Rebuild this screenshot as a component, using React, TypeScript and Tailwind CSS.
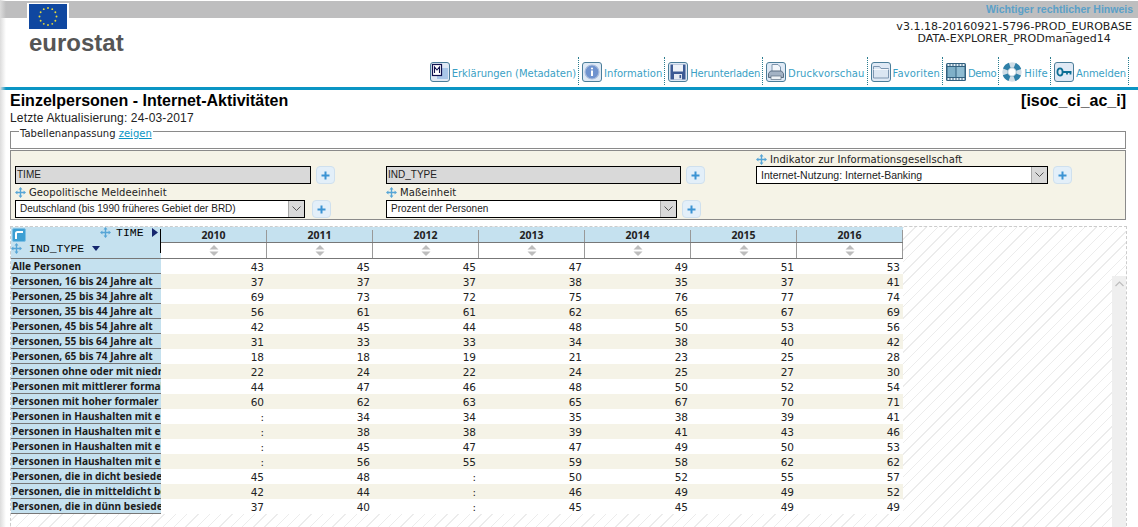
import React from "react";

const years = ["2010", "2011", "2012", "2013", "2014", "2015", "2016"];

const rows: [string, string[]][] = [
  ["Alle Personen", ["43", "45", "45", "47", "49", "51", "53"]],
  ["Personen, 16 bis 24 Jahre alt", ["37", "37", "37", "38", "35", "37", "41"]],
  ["Personen, 25 bis 34 Jahre alt", ["69", "73", "72", "75", "76", "77", "74"]],
  ["Personen, 35 bis 44 Jahre alt", ["56", "61", "61", "62", "65", "67", "69"]],
  ["Personen, 45 bis 54 Jahre alt", ["42", "45", "44", "48", "50", "53", "56"]],
  ["Personen, 55 bis 64 Jahre alt", ["31", "33", "33", "34", "38", "40", "42"]],
  ["Personen, 65 bis 74 Jahre alt", ["18", "18", "19", "21", "23", "25", "28"]],
  ["Personen ohne oder mit niedri", ["22", "24", "22", "24", "25", "27", "30"]],
  ["Personen mit mittlerer formal", ["44", "47", "46", "48", "50", "52", "54"]],
  ["Personen mit hoher formaler B", ["60", "62", "63", "65", "67", "70", "71"]],
  ["Personen in Haushalten mit ei", [":", "34", "34", "35", "38", "39", "41"]],
  ["Personen in Haushalten mit ei", [":", "38", "38", "39", "41", "43", "46"]],
  ["Personen in Haushalten mit ei", [":", "45", "47", "47", "49", "50", "53"]],
  ["Personen in Haushalten mit ei", [":", "56", "55", "59", "58", "62", "62"]],
  ["Personen, die in dicht besiedel", ["45", "48", ":", "50", "52", "55", "57"]],
  ["Personen, die in mitteldicht be", ["42", "44", ":", "46", "49", "49", "52"]],
  ["Personen, die in dünn besiedel", ["37", "40", ":", "45", "45", "49", "49"]],
];

const EuFlag = () => {
  const stars = Array.from({ length: 12 }, (_, i) => {
    const a = (i * Math.PI) / 6;
    return { x: 19 + Math.sin(a) * 8.5, y: 12.5 - Math.cos(a) * 8.5 };
  });
  return (
    <svg width="42" height="27" viewBox="-2 -1 42 27" className="block">
      <rect x="-2" y="-1" width="42" height="27" fill="#fff" />
      <rect x="0" y="0" width="38" height="25" fill="#0f47a0" />
      {stars.map((s, i) => (
        <circle key={i} cx={s.x} cy={s.y} r="0.95" fill="#e6d93a" />
      ))}
    </svg>
  );
};

const Tile = ({ children }: { children: React.ReactNode }) => (
  <span className="w-[20px] h-[20px] rounded-[3px] border border-[#4b7d99] bg-[#dfe9f5] flex items-center justify-center shrink-0 overflow-hidden">
    {children}
  </span>
);

const MetaIcon = () => (
  <Tile>
    <svg width="18" height="18" viewBox="0 0 18 18">
      <rect x="6" y="5" width="11" height="11" fill="#a9c6e8" />
      <rect x="1.5" y="1.5" width="9" height="11" fill="#fff" stroke="#10124f" strokeWidth="1.2" />
      <path d="M3.5 10V4l2.5 3 2.5-3v6" fill="none" stroke="#10124f" strokeWidth="1.1" />
    </svg>
  </Tile>
);

const InfoIcon = () => (
  <Tile>
    <svg width="18" height="18" viewBox="0 0 18 18">
      <circle cx="9" cy="9" r="7" fill="#6f93cf" stroke="#a9bcdc" strokeWidth="1.2" />
      <circle cx="9" cy="5.5" r="1.1" fill="#fff" />
      <rect x="8" y="7.5" width="2" height="5.5" fill="#fff" />
    </svg>
  </Tile>
);

const SaveIcon = () => (
  <Tile>
    <svg width="18" height="18" viewBox="0 0 18 18">
      <rect x="1.5" y="1.5" width="15" height="15" fill="#3d5a94" />
      <rect x="4" y="1.5" width="10" height="7" fill="#eef2f8" />
      <rect x="5" y="11" width="8" height="5.5" fill="#e6ebf3" />
      <rect x="10.5" y="12" width="1.6" height="3.2" fill="#3d5a94" />
    </svg>
  </Tile>
);

const PrintIcon = () => (
  <Tile>
    <svg width="18" height="18" viewBox="0 0 18 18">
      <path d="M5 1.5h6l2.5 2.5v5H5z" fill="#f2f6fb" stroke="#7b93ad" />
      <path d="M1.5 10.5l2-2.5h11l2 2.5v4h-15z" fill="#a3b2c4" stroke="#5d6f83" />
      <rect x="4" y="13" width="10" height="3.5" fill="#eef2f6" stroke="#5d6f83" strokeWidth="0.7" />
    </svg>
  </Tile>
);

const FolderIcon = () => (
  <Tile>
    <svg width="18" height="18" viewBox="0 0 18 18">
      <path d="M1.5 15V3.5h6l1.5 2h7.5V15z" fill="#dbe6f2" stroke="#7e97b1" />
      <path d="M1.5 6.5h15" stroke="#f6f9fc" />
    </svg>
  </Tile>
);

const FilmIcon = () => (
  <svg width="20" height="20" viewBox="0 0 20 20" className="shrink-0">
    <rect x="0" y="1" width="20" height="18" rx="1.5" fill="#33617f" />
    <rect x="1.5" y="5" width="8" height="10" fill="#7fb0c8" />
    <rect x="10.5" y="5" width="8" height="10" fill="#8fbcd2" />
    {[1.5, 4.5, 7.5, 10.5, 13.5, 16.5].map((x) => (
      <React.Fragment key={x}>
        <rect x={x} y="2" width="2" height="2" fill="#e3eef5" />
        <rect x={x} y="16" width="2" height="2" fill="#e3eef5" />
      </React.Fragment>
    ))}
  </svg>
);

const BuoyIcon = () => (
  <svg width="20" height="20" viewBox="0 0 20 20" className="shrink-0">
    <circle cx="10" cy="10" r="7" fill="none" stroke="#cfdde6" strokeWidth="5.4" />
    <circle cx="10" cy="10" r="7" fill="none" stroke="#2f80a8" strokeWidth="5.4" strokeDasharray="6 5" strokeDashoffset="-2.5" />
    <circle cx="10" cy="10" r="4.2" fill="#fff" stroke="#6a97b0" strokeWidth="0.6" />
  </svg>
);

const KeyIcon = () => (
  <Tile>
    <svg width="18" height="18" viewBox="0 0 18 18">
      <ellipse cx="5" cy="9" rx="2.6" ry="3.6" fill="none" stroke="#0d6f95" strokeWidth="1.8" />
      <path d="M7.5 9h9M12 9v2.5M15.5 9v2.5" fill="none" stroke="#0d6f95" strokeWidth="1.8" />
    </svg>
  </Tile>
);

const MoveIcon = () => (
  <svg width="11" height="11" viewBox="0 0 11 11" className="shrink-0">
    <path d="M5.5 0l2 2.4h-1.3v2.4h2.4V3.5L11 5.5 8.6 7.5V6.2H6.2v2.4h1.3l-2 2.4-2-2.4h1.3V6.2H2.4v1.3L0 5.5l2.4-2v1.3h2.4V2.4H3.5z" fill="#56a5d6" />
  </svg>
);

const PlusButton = () => (
  <span className="w-[19px] h-[18px] rounded-[4px] border border-[#cfe0ee] bg-[#e3eff9] flex items-center justify-center shrink-0">
    <svg width="9" height="9" viewBox="0 0 9 9">
      <path d="M4.5 0.5v8M0.5 4.5h8" stroke="#3b93d3" strokeWidth="2" />
    </svg>
  </span>
);

const SelectBox = ({ text, width, size = "text-[10px]" }: { text: string; width: string; size?: string }) => (
  <div className={`${width} h-[18px] border border-black bg-white flex items-center shrink-0`}>
    <span className={`flex-1 pl-[4px] font-['Liberation_Sans',sans-serif] ${size} leading-[14px] text-[#222] truncate`}>{text}</span>
    <span className="w-[16px] h-[16px] bg-[#d9d9d9] border-l border-[#a8a8a8] flex items-center justify-center">
      <svg width="9" height="6" viewBox="0 0 9 6">
        <path d="M0.5 0.5l4 4 4-4" fill="none" stroke="#555" />
      </svg>
    </span>
  </div>
);

const FixedBox = ({ text, width }: { text: string; width: string }) => (
  <div className={`${width} h-[18px] border border-black bg-[#d9d9d9] flex items-center pl-[1px] font-['Liberation_Sans',sans-serif] text-[10px] leading-[14px] text-[#222] shrink-0`}>
    {text}
  </div>
);

const FilterLabel = ({ text }: { text: string }) => (
  <div className="h-[15px] flex items-center gap-[3px] text-[10px] tracking-[0.08px] text-[#222]">
    <MoveIcon />
    <span>{text}</span>
  </div>
);

const ToolItem = ({ icon, label, spacing }: { icon: React.ReactNode; label: string; spacing: string }) => (
  <div className="h-[28px] pt-[2px] flex items-center pr-[2px] mr-[3px] border-r border-dotted border-[#2b7d8f]">
    {icon}
    <span className={`ml-[2px] mt-[2px] text-[10px] ${spacing} text-[#3a9fc5] whitespace-nowrap`}>{label}</span>
  </div>
);

export default function App() {
  return (
    <div className="relative w-[1138px] h-[527px] overflow-hidden bg-white font-['DejaVu_Sans',sans-serif] text-black">
      <div className="pointer-events-none absolute left-0 top-0 bottom-0 w-[6px] bg-gradient-to-r from-[#dcdcdc] to-transparent" />

      {/* top bar */}
      <div className="mt-px h-[17px] bg-[#bebebf] flex items-center justify-end pr-[5px]">
        <span className="font-['Liberation_Sans',sans-serif] text-[10.5px] font-bold text-[#5aa0c8]">Wichtiger rechtlicher Hinweis</span>
      </div>

      {/* header */}
      <div className="h-[69px] flex justify-between border-b-[3px] border-[#0b95c4] box-content">
        <div className="ml-[27px] -mt-[15px]">
          <EuFlag />
          <div className="ml-[2px] font-['Liberation_Sans',sans-serif] font-bold text-[24px] leading-[26px] text-[#555]">
            eurostat
          </div>
        </div>
        <div className="flex flex-col items-end pr-[6px]">
          <div className="pt-[3px] text-center text-[11px] leading-[12px] text-[#222] tracking-[0.03px]">
            <div>v3.1.18-20160921-5796-PROD_EUROBASE</div>
            <div>DATA-EXPLORER_PRODmanaged14</div>
          </div>
          <div className="mt-auto mb-[2px] flex items-end">
            <ToolItem icon={<MetaIcon />} label="Erklärungen (Metadaten)" spacing="tracking-[-0.05px]" />
            <ToolItem icon={<InfoIcon />} label="Information" spacing="tracking-[0.03px]" />
            <ToolItem icon={<SaveIcon />} label="Herunterladen" spacing="tracking-[-0.2px]" />
            <ToolItem icon={<PrintIcon />} label="Druckvorschau" spacing="tracking-[0.1px]" />
            <ToolItem icon={<FolderIcon />} label="Favoriten" spacing="tracking-[0.14px]" />
            <ToolItem icon={<FilmIcon />} label="Demo" spacing="tracking-[-0.4px]" />
            <ToolItem icon={<BuoyIcon />} label="Hilfe" spacing="tracking-[0.2px]" />
            <ToolItem icon={<KeyIcon />} label="Anmelden" spacing="tracking-[-0.08px]" />
          </div>
        </div>
      </div>

      {/* title */}
      <div className="pl-[10px] pr-[12px] pt-[2px] flex justify-between font-['Liberation_Sans',sans-serif] font-bold text-[16px] leading-[18px]">
        <span>Einzelpersonen - Internet-Aktivitäten</span>
        <span>[isoc_ci_ac_i]</span>
      </div>
      <div className="pl-[10px] font-['Liberation_Sans',sans-serif] text-[12px] tracking-[0.15px] leading-[16px] text-[#222]">
        Letzte Aktualisierung: 24-03-2017
      </div>

      {/* table customisation */}
      <div className="ml-[10px] mr-[12px] mt-[5px] h-[18px] border border-[#8a8a8a]">
        <div className="-mt-[4px] ml-[8px] w-fit bg-white px-px text-[10px] leading-[12px] text-[#222]">
          Tabellenanpassung <a className="text-[#0b95c4] underline">zeigen</a>
        </div>
      </div>

      {/* filters */}
      <div className="ml-[10px] mr-[12px] mt-[1px] h-[70px] border border-[#8a8a8a] bg-[#f5f3e7] pl-[4px] flex">
        <div className="w-[371px] pt-[15px]">
          <div className="flex items-center gap-[5px]">
            <FixedBox text="TIME" width="w-[296px]" />
            <PlusButton />
          </div>
          <div className="mt-[1px]">
            <FilterLabel text="Geopolitische Meldeeinheit" />
          </div>
          <div className="flex items-center gap-[7px]">
            <SelectBox text="Deutschland (bis 1990 früheres Gebiet der BRD)" width="w-[290px]" />
            <PlusButton />
          </div>
        </div>
        <div className="w-[370px] pt-[15px]">
          <div className="flex items-center gap-[5px]">
            <FixedBox text="IND_TYPE" width="w-[295px]" />
            <PlusButton />
          </div>
          <div className="mt-[1px]">
            <FilterLabel text="Maßeinheit" />
          </div>
          <div className="flex items-center gap-[5px]">
            <SelectBox text="Prozent der Personen" width="w-[291px]" />
            <PlusButton />
          </div>
        </div>
        <div className="pt-[1px]">
          <FilterLabel text="Indikator zur Informationsgesellschaft" />
          <div className="-mt-px flex items-center gap-[5px]">
            <SelectBox text="Internet-Nutzung: Internet-Banking" width="w-[292px]" size="text-[10.5px]" />
            <PlusButton />
          </div>
        </div>
      </div>

      {/* data table on hatched area */}
      <div className="relative ml-[10px] mr-[11px] mt-[6px] h-[310px] border-t border-r border-l border-dashed border-[#cccccc] bg-[repeating-linear-gradient(135deg,#ffffff_0px,#ffffff_7px,#ececec_7px,#ececec_8px)]">
        <div className="absolute right-0 top-[49px] bottom-0 w-[14px] bg-[#efefef] flex justify-center pt-[5px]">
          <svg width="9" height="6" viewBox="0 0 9 6">
            <path d="M0.5 5l4-4 4 4" fill="none" stroke="#bdbdbd" strokeWidth="1.2" />
          </svg>
        </div>

        <div className="w-[892px]">
          {/* column headers */}
          <div className="flex h-[32px] border-b border-[#777]">
            <div className="relative w-[150px] bg-[#c5e1ef] shrink-0">
              <span className="absolute right-0 top-[2px] w-px h-[24px] bg-black" />
              <div className="flex items-start h-[14px]">
                <span className="ml-[1px] mt-[1px] w-[14px] h-[14px] rounded-[2px] bg-[#3d9fd3] border border-[#7fc0e4] flex items-center justify-center">
                  <svg width="10" height="10" viewBox="0 0 10 10">
                    <path d="M2 9V3.5Q2 2 3.5 2H9" fill="none" stroke="#fff" strokeWidth="2" />
                  </svg>
                </span>
                <span className="ml-[74px] flex items-center">
                  <MoveIcon />
                  <span className="ml-[5px] font-['Liberation_Mono',monospace] text-[11.5px] leading-[11px]">TIME</span>
                  <svg width="6" height="9" viewBox="0 0 6 9" className="ml-[8px]">
                    <path d="M0 0l6 4.5L0 9z" fill="#14266e" />
                  </svg>
                </span>
              </div>
              <div className="flex items-center h-[11px] mt-[2px]">
                <MoveIcon />
                <span className="ml-[7px] font-['Liberation_Mono',monospace] text-[11.5px] leading-[11px]">IND_TYPE</span>
                <svg width="8" height="5" viewBox="0 0 8 5" className="ml-[8px]">
                  <path d="M0 0h8L4 5z" fill="#14266e" />
                </svg>
              </div>
            </div>
            <div className="flex-1 flex flex-col">
              <div className="h-[16px] bg-[#c5e1ef] border-b border-[#777] flex">
                {years.map((y) => (
                  <div key={y} className="w-[106px] mt-[3px] border-r border-[#999] flex items-end pb-[2px] justify-center">
                    <span className="font-['Noto_Sans',sans-serif] text-[10.5px] leading-[10px] font-bold text-[#222]">{y}</span>
                  </div>
                ))}
              </div>
              <div className="flex-1 bg-white flex">
                {years.map((y) => (
                  <div key={y} className="w-[106px] border-r border-[#999] flex items-center justify-center">
                    <svg width="10" height="11" viewBox="0 0 10 11">
                      <path d="M5 0l4.5 4.5H0.5zM5 11L0.5 6.5h9z" fill="#bdbdbd" />
                    </svg>
                  </div>
                ))}
              </div>
            </div>
          </div>

          {/* rows */}
          {rows.map(([label, values], i) => (
            <div key={i} className="flex h-[15px]">
              <div className="w-[150px] shrink-0 bg-[#c5e1ef] border-b border-[#777] pl-px pt-px font-['Noto_Sans',sans-serif] text-[10.1px] leading-[12px] font-bold text-[#1c1c1c] whitespace-nowrap overflow-hidden">
                {label}
              </div>
              {values.map((v, j) => (
                <div
                  key={j}
                  className={`w-[106px] pr-[3px] pt-[2px] text-right text-[10.5px] leading-[13px] text-[#222] ${
                    i % 2 === 1 ? "bg-[#f5f3e7]" : "bg-white"
                  }`}
                >
                  {v}
                </div>
              ))}
            </div>
          ))}
        </div>
      </div>
    </div>
  );
}
